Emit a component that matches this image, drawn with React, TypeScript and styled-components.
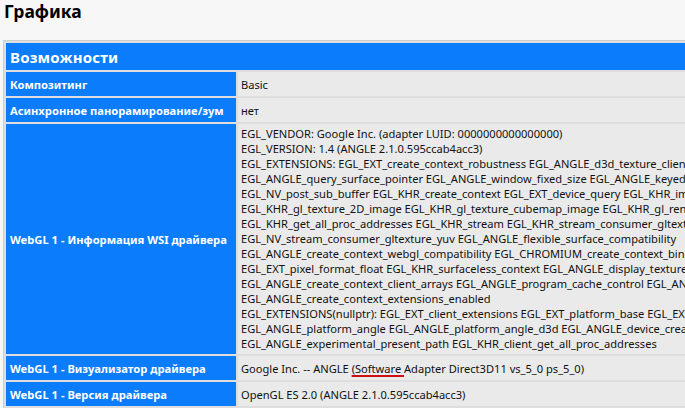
import React from "react";
import styled, { createGlobalStyle } from "styled-components";

const Global = createGlobalStyle`
  html, body { margin: 0; padding: 0; overflow: hidden; background: #f7f7f7; }
  body { width: 685px; height: 408px; }
  #root { font-family: "Noto Sans", "Open Sans", sans-serif; }
`;

const Page = styled.div`
  padding: 0 0 0 4px;
  width: 1100px;
`;

const Title = styled.h2`
  margin: 0;
  padding: 1px 0 0 0;
  height: 39px;
  font-size: 17.5px;
  line-height: 20px;
  font-weight: 700;
  color: #000;
`;

const Table = styled.table`
  border-collapse: separate;
  border-spacing: 2px;
  border: 1px solid #cfcfcf;
  background: #dedede;
  width: 1000px;
  margin-left: -1px;
`;

const HeaderCell = styled.th`
  background: #0b7dfc;
  color: #fff;
  text-align: left;
  font-size: 15px;
  font-weight: 700;
  height: 27px;
  padding: 0 0 0 4px;
  letter-spacing: 0.2px;
`;

const Label = styled.td`
  background: #0b7dfc;
  color: #fff;
  font-weight: 700;
  font-size: 11.2px;
  width: 222px;
  padding: 0 4px 0 4px;
  white-space: nowrap;
  vertical-align: middle;
`;

const Value = styled.td<{ $multi?: boolean }>`
  background: #eaeaea;
  color: #111;
  font-size: 11.1px;
  line-height: 15px;
  height: ${(p) => (p.$multi ? "auto" : "24px")};
  padding: ${(p) => (p.$multi ? "2px 4px 3px 3px" : "0 4px 0 3px")};
  white-space: nowrap;
  vertical-align: middle;
`;

const Line = styled.div``;

const Spell = styled.span`
  text-decoration: underline;
  text-decoration-color: #d01010;
  text-decoration-thickness: 2px;
  text-underline-offset: 2px;
`;

const wsi = [
  "EGL_VENDOR: Google Inc. (adapter LUID: 0000000000000000)",
  "EGL_VERSION: 1.4 (ANGLE 2.1.0.595ccab4acc3)",
  "EGL_EXTENSIONS: EGL_EXT_create_context_robustness EGL_ANGLE_d3d_texture_client_buffer EGL_ANGLE_surface_d3d_texture_2d_share_handle",
  "EGL_ANGLE_query_surface_pointer EGL_ANGLE_window_fixed_size EGL_ANGLE_keyed_mutex EGL_ANGLE_surface_orientation",
  "EGL_NV_post_sub_buffer EGL_KHR_create_context EGL_EXT_device_query EGL_KHR_image EGL_KHR_image_base",
  "EGL_KHR_gl_texture_2D_image EGL_KHR_gl_texture_cubemap_image EGL_KHR_gl_renderbuffer_image",
  "EGL_KHR_get_all_proc_addresses EGL_KHR_stream EGL_KHR_stream_consumer_gltexture",
  "EGL_NV_stream_consumer_gltexture_yuv EGL_ANGLE_flexible_surface_compatibility",
  "EGL_ANGLE_create_context_webgl_compatibility EGL_CHROMIUM_create_context_bind_generates_resource",
  "EGL_EXT_pixel_format_float EGL_KHR_surfaceless_context EGL_ANGLE_display_texture_share_group",
  "EGL_ANGLE_create_context_client_arrays EGL_ANGLE_program_cache_control EGL_ANGLE_robust_resource_initialization",
  "EGL_ANGLE_create_context_extensions_enabled",
  "EGL_EXTENSIONS(nullptr): EGL_EXT_client_extensions EGL_EXT_platform_base EGL_EXT_platform_device",
  "EGL_ANGLE_platform_angle EGL_ANGLE_platform_angle_d3d EGL_ANGLE_device_creation EGL_ANGLE_device_creation_d3d11",
  "EGL_ANGLE_experimental_present_path EGL_KHR_client_get_all_proc_addresses",
];

export default function App() {
  return (
    <Page>
      <Global />
      <Title>Графика</Title>
      <Table>
        <tbody>
          <tr>
            <HeaderCell colSpan={2}>Возможности</HeaderCell>
          </tr>
          <tr>
            <Label>Композитинг</Label>
            <Value>Basic</Value>
          </tr>
          <tr>
            <Label>Асинхронное панорамирование/зум</Label>
            <Value>нет</Value>
          </tr>
          <tr>
            <Label>WebGL 1 - Информация WSI драйвера</Label>
            <Value $multi>
              {wsi.map((l, i) => (
                <Line key={i}>{l}</Line>
              ))}
            </Value>
          </tr>
          <tr>
            <Label>WebGL 1 - Визуализатор драйвера</Label>
            <Value>
              Google Inc. -- ANGLE <Spell>(Software </Spell>Adapter Direct3D11 vs_5_0 ps_5_0)
            </Value>
          </tr>
          <tr>
            <Label>WebGL 1 - Версия драйвера</Label>
            <Value>OpenGL ES 2.0 (ANGLE 2.1.0.595ccab4acc3)</Value>
          </tr>
          <tr>
            <Label>WebGL 1 - Поставщик драйвера</Label>
            <Value>Google Inc.</Value>
          </tr>
        </tbody>
      </Table>
    </Page>
  );
}
